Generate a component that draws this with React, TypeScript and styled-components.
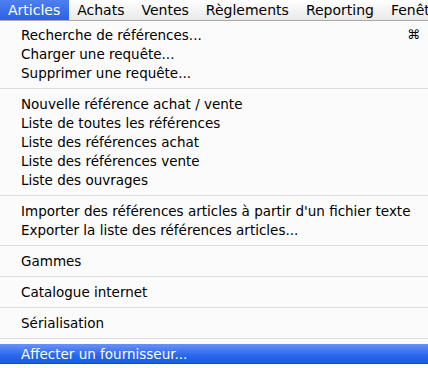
import React from "react";
import styled, { createGlobalStyle } from "styled-components";

const GlobalStyle = createGlobalStyle`
  html, body {
    margin: 0;
    padding: 0;
    width: 428px;
    height: 368px;
    overflow: hidden;
    background: #fbfbfb;
  }
  body {
    font-family: "DejaVu Sans", "Liberation Sans", sans-serif;
    -webkit-font-smoothing: antialiased;
  }
`;

const Screen = styled.div`
  width: 428px;
  height: 368px;
  display: flex;
  flex-direction: column;
  overflow: hidden;
`;

const MenuBar = styled.div`
  height: 21px;
  display: flex;
  align-items: stretch;
  background: linear-gradient(#ffffff, #e9e9e9);
  border-bottom: 1px solid #a8a8a8;
  box-sizing: border-box;
  white-space: nowrap;
  overflow: hidden;
`;

const MenuTitle = styled.div<{ $active?: boolean }>`
  display: flex;
  align-items: center;
  padding: 0 9px 0 8px;
  font-size: 14px;
  color: ${(p) => (p.$active ? "#fff" : "#000")};
  background: ${(p) =>
    p.$active ? "linear-gradient(#4f7ff0, #2a63e6)" : "transparent"};
`;

const Menu = styled.ul`
  list-style: none;
  margin: 0;
  padding: 4px 0 0;
  display: flex;
  flex-direction: column;
  flex: 1;
`;

const Item = styled.li<{ $active?: boolean }>`
  height: 19px;
  display: flex;
  align-items: center;
  justify-content: space-between;
  padding: 0 0 0 21px;
  font-size: 13.5px;
  white-space: nowrap;
  color: ${(p) => (p.$active ? "#fff" : "#000")};
  background: ${(p) =>
    p.$active ? "linear-gradient(#6a92f5, #2a66ee 60%, #1a58e6)" : "transparent"};
  border-bottom: ${(p) => (p.$active ? "1px solid #1448c8" : "none")};
`;

const Shortcut = styled.span`
  font-family: "DejaVu Sans", sans-serif;
  font-size: 13px;
  margin-right: 8px;
`;

const Separator = styled.li`
  height: 12px;
  display: flex;
  align-items: center;
  &::after {
    content: "";
    flex: 1;
    height: 1px;
    background: #dcdcdc;
  }
`;

const titles = ["Articles", "Achats", "Ventes", "Règlements", "Reporting", "Fenêtre"];

const groups: string[][] = [
  ["Recherche de références...", "Charger une requête...", "Supprimer une requête..."],
  [
    "Nouvelle référence achat / vente",
    "Liste de toutes les références",
    "Liste des références achat",
    "Liste des références vente",
    "Liste des ouvrages",
  ],
  [
    "Importer des références articles à partir d'un fichier texte",
    "Exporter la liste des références articles...",
  ],
  ["Gammes"],
  ["Catalogue internet"],
  ["Sérialisation"],
  ["Affecter un fournisseur..."],
];

export default function App() {
  return (
    <Screen>
      <GlobalStyle />
      <MenuBar>
        {titles.map((t, i) => (
          <MenuTitle key={t} $active={i === 0}>
            {t}
          </MenuTitle>
        ))}
      </MenuBar>
      <Menu>
        {groups.map((g, gi) => (
          <React.Fragment key={gi}>
            {gi > 0 && <Separator />}
            {g.map((label, li) => (
              <Item key={label} $active={label.startsWith("Affecter")}>
                <span>{label}</span>
                {gi === 0 && li === 0 && <Shortcut>⌘</Shortcut>}
              </Item>
            ))}
          </React.Fragment>
        ))}
      </Menu>
    </Screen>
  );
}
